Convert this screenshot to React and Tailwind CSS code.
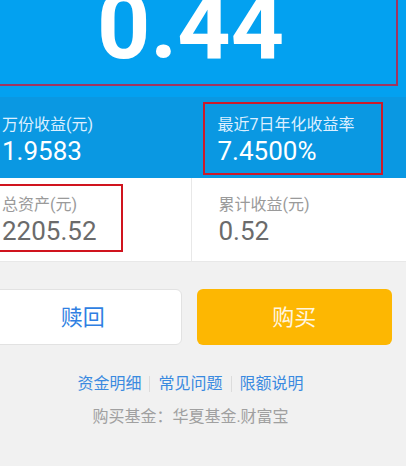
import React from 'react';

const font = { fontFamily: 'Roboto, "Noto Sans CJK SC", sans-serif' };

const Stat = ({ label, value, labelClass, valueClass }) => (
  <>
    <div className={`text-[16px] leading-none h-[16px] whitespace-nowrap ${labelClass}`}>{label}</div>
    <div className={`text-[26px] leading-none h-[26px] mt-[5px] whitespace-nowrap ${valueClass}`}>{value}</div>
  </>
);

const App = () => {
  const links = ['资金明细', '常见问题', '限额说明'];
  return (
    <div className="w-[406px] h-[466px] overflow-hidden bg-[#f1f1f1]" style={font}>
      <div className="ml-[-25px] w-[431px]">
        {/* yesterday income */}
        <div className="h-[97px] bg-[#03a1f0] px-[8px] overflow-hidden">
          <div className="mt-[-20px] h-[106px] border-2 border-[#a03560] flex items-end justify-center pb-[11px]">
            <span className="text-[93px] leading-none font-bold text-white">0.44</span>
          </div>
        </div>

        {/* blue band */}
        <div className="grid grid-cols-2 h-[81px] bg-[#0a98e2]">
          <div className="pl-[27px] pt-[20px]">
            <Stat label="万份收益(元)" value="1.9583" labelClass="text-[#dcefff]" valueClass="text-white" />
          </div>
          <div className="pl-[12px] pr-[23px] pt-[5px]">
            <div className="h-[73px] border-2 border-[#cc1a2a] pl-[13px] pt-[13px]">
              <Stat label="最近7日年化收益率" value="7.4500%" labelClass="text-[#dcefff]" valueClass="text-white" />
            </div>
          </div>
        </div>

        {/* white stats */}
        <div className="grid grid-cols-2 h-[84px] bg-white border-b border-[#e8e8e8]">
          <div className="pl-[12px] pt-[6px]">
            <div className="w-[136px] h-[68px] border-2 border-[#d0141e] pl-[13px] pt-[11px]">
              <Stat label="总资产(元)" value="2205.52" labelClass="text-[#9a9a9a]" valueClass="text-[#6b6b6b]" />
            </div>
          </div>
          <div className="pl-[27px] pt-[19px] border-l border-[#e8e8e8]">
            <Stat label="累计收益(元)" value="0.52" labelClass="text-[#9a9a9a]" valueClass="text-[#6b6b6b]" />
          </div>
        </div>

        {/* buttons */}
        <div className="flex gap-[15px] pl-[9px] pr-[14px] pt-[27px]">
          <button className="flex-1 h-[56px] rounded-[6px] bg-white border border-[#e2e2e2] text-[22px] text-[#2f7fe2]">
            赎回
          </button>
          <button className="flex-1 h-[56px] rounded-[6px] bg-[#fdb702] text-[22px] text-[#fff6e0]">
            购买
          </button>
        </div>

        {/* links */}
        <div className="flex justify-center mt-[31px]">
          {links.map((l, i) => (
            <span
              key={l}
              className={`px-[8px] text-[16px] leading-none h-[16px] text-[#3a8ae0] ${i > 0 ? 'border-l border-[#dcdcdc]' : ''}`}
            >
              {l}
            </span>
          ))}
        </div>
        <div className="mt-[17px] text-center text-[16px] leading-none text-[#a0a0a0]">
          购买基金：华夏基金.财富宝
        </div>
      </div>
    </div>
  );
};

export default App;
